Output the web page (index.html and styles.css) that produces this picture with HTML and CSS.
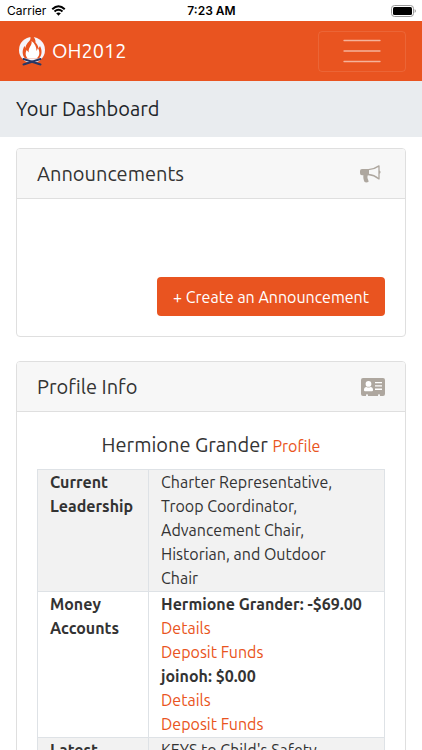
FILE: index.html
```html
<!DOCTYPE html>
<html lang="en">
<head>
<meta charset="utf-8">
<meta name="viewport" content="width=device-width, initial-scale=1">
<title>OH2012 Dashboard</title>
<link rel="stylesheet" href="styles.css">
</head>
<body>
<div class="status">
  <div class="status-left">
    <span>Carrier</span>
    <svg class="wifi" viewBox="0 0 30 22" aria-hidden="true">
      <path d="M2.500 8.500Q15-3.500 27.500 8.500M7 13.200Q15 6 23 13.200" fill="none" stroke="#000" stroke-width="4"/>
      <path d="M15 21.500l-4.700-4.800Q15 13 19.700 16.700z"/>
    </svg>
  </div>
  <strong class="status-time">7:23 AM</strong>
  <div class="status-right">
    <svg class="battery" viewBox="0 0 25 12" aria-hidden="true">
      <rect x=".5" y=".5" width="22" height="11" rx="3" fill="none" stroke="#999"/>
      <rect x="2" y="2" width="19" height="8" rx="1.500"/>
      <path d="M23.700 4q2.200 2 0 4z" fill="#888"/>
    </svg>
  </div>
</div>
<header class="navbar">
  <a class="brand" href="#">
    <svg class="logo" viewBox="0 0 28 30" aria-hidden="true">
      <circle cx="14" cy="14" r="13" fill="#f6f5fb"/>
      <path d="M12 0c1.500 3-.5 5-2.500 7-1 1.500-2 3-2 5l-1-2c-2.500 4-2.500 9 .5 12.500h14c3.500-3.500 3-9 1-12.500l-1.500 2.500c-.5-3-1.500-4.500-3-6 .3-2.500-.8-5-3-6.500z" fill="#e95420"/>
      <path d="M13.500 5c.8 3.500-1.500 5-2.500 8-.5 1.500-.3 2.500-.3 3.500l-2-2.500c-1.700 3-1.200 6.500 1.300 8.500h8.500c3.500-2.500 3.500-6.500 1.500-10.500l-1.500 3c0-4-1.500-7.500-5-10z" fill="#fff"/>
      <path d="M5.500 23l17 5.500M22.500 23l-17 5.500" stroke="#283765" stroke-width="2" stroke-linecap="round"/>
    </svg>
    <span>OH2012</span>
  </a>
  <button class="toggler" type="button" aria-label="Toggle navigation">
    <svg viewBox="0 0 38 24" aria-hidden="true"><path d="M1 1.500h36M1 12h36M1 22.500h36" stroke="#fff" stroke-opacity=".55" stroke-width="1.300" stroke-linecap="round"/></svg>
  </button>
</header>
<h1 class="page-title">Your Dashboard</h1>
<main class="content">
  <section class="card">
    <div class="card-header">
      <h2>Announcements</h2>
      <svg class="icon-horn" viewBox="0 0 21 18" aria-hidden="true">
        <path d="M2 4h7v6.200H7.800c-.6 1.600-.4 3 .2 4.200.4.900.6 1.600.6 2.400-1.200.7-3 .8-4 .2-1-2-1.600-4.300-1.200-6.800H2a2 2 0 0 1-2-2V6a2 2 0 0 1 2-2z"/>
        <path class="horn-line" d="M8.500 4.700C12.500 4.500 16 3 19 .9v13C16 11.500 12.500 9.800 8.500 9.500"/>
        <path d="M19 5.500a1.600 1.600 0 0 1 0 3.200z"/>
      </svg>
    </div>
    <div class="card-body announcements">
      <button class="btn" type="button">+ Create an Announcement</button>
    </div>
  </section>
  <section class="card">
    <div class="card-header">
      <h2>Profile Info</h2>
      <svg class="icon-card" viewBox="0 0 24 18" aria-hidden="true">
        <path d="M2 0h20a2 2 0 0 1 2 2v14a2 2 0 0 1-2 2h-3v-1a.7.7 0 0 0-.7-.7h-.6a.7.7 0 0 0-.7.7v1H7v-1a.7.7 0 0 0-.7-.7h-.6a.7.7 0 0 0-.7.7v1H2a2 2 0 0 1-2-2V2a2 2 0 0 1 2-2z"/>
        <g fill="#fff"><circle cx="7.500" cy="5.900" r="2.900"/><path d="M5.500 9q2 1 4 0c1.600 0 2.500 1.200 2.500 2.700v.6q0 1-1 1H4q-1 0-1-1v-.6C3 10.200 3.900 9 5.500 9z"/><path d="M14 4h7v1.300h-7zM14 7.300h7v1.300h-7zM14 10.600h7v1.300h-7z"/></g>
      </svg>
    </div>
    <div class="card-body">
      <h3 class="name">Hermione Grander <a href="#">Profile</a></h3>
      <table>
        <tbody>
          <tr><th scope="row">Current Leadership</th><td>Charter Representative, Troop Coordinator, Advancement Chair, Historian, and Outdoor Chair</td></tr>
          <tr><th scope="row">Money Accounts</th><td><strong>Hermione Grander: -$69.00</strong><br><a href="#">Details</a><br><a href="#">Deposit Funds</a><br><strong>joinoh: $0.00</strong><br><a href="#">Details</a><br><a href="#">Deposit Funds</a></td></tr>
          <tr><th scope="row">Latest</th><td>KEYS to Child's Safety</td></tr>
        </tbody>
      </table>
    </div>
  </section>
</main>
</body>
</html>
```
FILE: styles.css
```css
* { box-sizing: border-box; }

body {
  margin: 0;
  height: 100vh;
  overflow: hidden;
  display: flex;
  flex-direction: column;
  background: #fff;
  color: #333;
  font: 16px/24px Ubuntu, "Noto Sans", sans-serif;
}

a { color: #e95420; text-decoration: none; }
h1, h2, h3 { margin: 0; font-weight: 400; }

.status {
  flex: none;
  display: grid;
  grid-template-columns: 1fr auto 1fr;
  align-items: center;
  height: 21px;
  padding: 0 6px 0 7px;
  color: #000;
  font: 12px/20px Inter, sans-serif;
}
.status-left { display: flex; align-items: center; gap: 5px; }
.status-time { font-weight: 600; }
.status-right { display: flex; justify-content: flex-end; }
.wifi { width: 15px; height: 11px; }
.battery { width: 25px; height: 12px; }

.navbar {
  flex: none;
  display: flex;
  align-items: center;
  justify-content: space-between;
  height: 60px;
  padding: 0 16px 0 18px;
  background: #e95420;
}
.brand {
  display: flex;
  align-items: center;
  gap: 6px;
  color: #fff;
  font-size: 20px;
}
.logo { width: 28px; height: 30px; }
.toggler {
  display: flex;
  align-items: center;
  justify-content: center;
  width: 88px;
  height: 41px;
  padding: 0;
  border: 1px solid rgba(255, 255, 255, .1);
  border-radius: 4px;
  background: transparent;
}
.toggler svg { width: 38px; height: 24px; }

.page-title {
  flex: none;
  padding: 12px 16px;
  background: #e9ecef;
  color: #212529;
  font-size: 20px;
  line-height: 32px;
}

.content {
  display: flex;
  flex-direction: column;
  gap: 24px;
  padding: 11px 16px;
}
.card { border: 1px solid #dfdfdf; border-radius: 4px; }
.card-header {
  display: flex;
  align-items: center;
  justify-content: space-between;
  height: 50px;
  padding: 0 20px;
  border-bottom: 1px solid #dfdfdf;
  border-radius: 3px 3px 0 0;
  background: #f7f7f7;
}
.card-header h2 { font-size: 20px; line-height: 24px; }
.card-header svg { fill: #aea79f; }
.icon-horn { width: 21px; height: 18px; margin-right: 4px; }
.card-header .horn-line { fill: none; stroke: #aea79f; stroke-width: 1.300px; stroke-linejoin: round; }
.icon-card { width: 24px; height: 18px; }
.card-body { padding: 20px; }

.announcements {
  display: flex;
  justify-content: flex-end;
  padding-top: 78px;
}
.btn {
  height: 39px;
  padding: 0 16px;
  border: 0;
  border-radius: 4px;
  background: #e95420;
  color: #fff;
  font: inherit;
}

.name { margin-bottom: 10px; font-size: 20px; line-height: 26px; text-align: center; }
.name a { font-size: 16px; }

table { width: 100%; border-collapse: collapse; }
th, td {
  padding: 0 20px 1px 12px;
  border: 1px solid #dee2e6;
  text-align: left;
  vertical-align: top;
}
th { width: 32%; padding-right: 12px; }
tr:nth-child(odd) { background: #f2f2f2; }
```
